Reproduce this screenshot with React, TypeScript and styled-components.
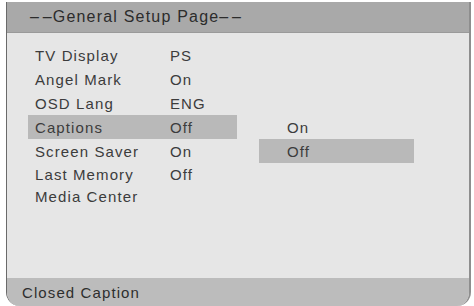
import styled, { createGlobalStyle } from 'styled-components'

const GlobalStyle = createGlobalStyle`
  html, body {
    margin: 0;
    padding: 0;
    background: #ffffff;
  }
  body {
    font-family: "Liberation Sans", Arial, sans-serif;
  }
`

interface Item {
  label: string
  value?: string
}

const items: Item[] = [
  { label: 'TV Display', value: 'PS' },
  { label: 'Angel Mark', value: 'On' },
  { label: 'OSD Lang', value: 'ENG' },
  { label: 'Captions', value: 'Off' },
  { label: 'Screen Saver', value: 'On' },
  { label: 'Last Memory', value: 'Off' },
  { label: 'Media Center' },
]

const options = ['On', 'Off']

const Frame = styled.div`
  margin: 2px 4px 0 6px;
  width: 462px;
  height: 304px;
  display: flex;
  flex-direction: column;
  background: #e6e6e6;
  border-left: 1px solid #6a6a6a;
  border-right: 2px solid #8e8e8e;
  border-radius: 0 0 14px 14px;
  overflow: hidden;
  color: #3c3c3c;
  font-size: 15px;
  letter-spacing: 1.1px;
`

const Header = styled.div`
  height: 30px;
  display: flex;
  align-items: center;
  padding-left: 23px;
  background: #a9a9a9;
  border-bottom: 1px solid #9a9a9a;
  color: #2c2c2c;
  font-size: 16px;
  letter-spacing: 1.2px;
`

const Body = styled.div`
  flex: 1;
  display: flex;
  gap: 22px;
  padding: 10px 0 0 21px;
`

const List = styled.div`
  display: flex;
  flex-direction: column;
  width: 209px;
`

const Row = styled.div<{ $active?: boolean; $h?: number }>`
  height: ${(p) => p.$h ?? 24}px;
  display: flex;
  align-items: center;
  padding-left: 7px;
  background: ${(p) => (p.$active ? '#b9b9b9' : 'transparent')};
`

const Label = styled.span`
  width: 135px;
`

const SubMenu = styled.div`
  display: flex;
  flex-direction: column;
  width: 155px;
  margin-top: 72px;
`

const Option = styled.div<{ $active?: boolean }>`
  height: 24px;
  display: flex;
  align-items: center;
  padding-left: 28px;
  background: ${(p) => (p.$active ? '#b9b9b9' : 'transparent')};
`

const Footer = styled.div`
  height: 28px;
  display: flex;
  align-items: center;
  padding-left: 15px;
  background: #bcbcbc;
  color: #2e2e2e;
`

export default function App() {
  const selected = 3
  const selectedOption = 1

  return (
    <>
      <GlobalStyle />
      <Frame>
        <Header>–&#8202;–General Setup Page–&#8202;–</Header>
        <Body>
          <List>
            {items.map((item, i) => (
              <Row key={item.label} $active={i === selected} $h={i >= 5 ? 22 : 24}>
                <Label>{item.label}</Label>
                {item.value && <span>{item.value}</span>}
              </Row>
            ))}
          </List>
          <SubMenu>
            {options.map((o, i) => (
              <Option key={o} $active={i === selectedOption}>
                {o}
              </Option>
            ))}
          </SubMenu>
        </Body>
        <Footer>Closed Caption</Footer>
      </Frame>
    </>
  )
}
